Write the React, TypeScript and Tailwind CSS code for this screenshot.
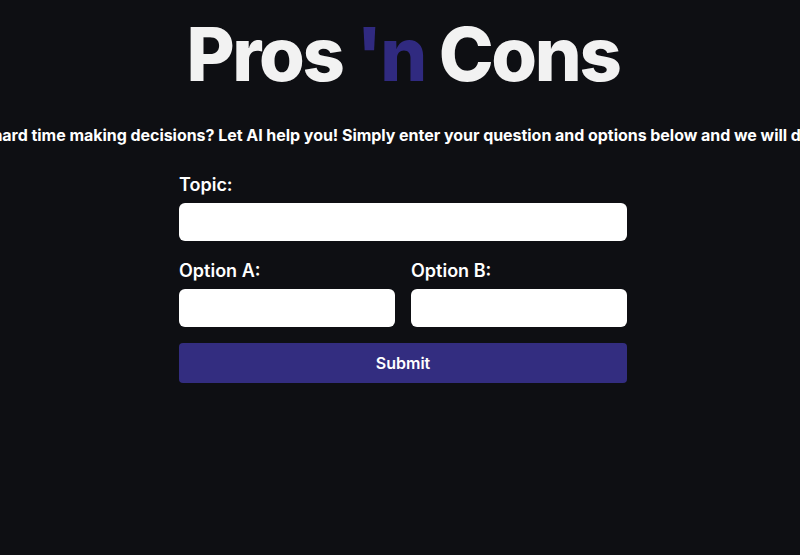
import React from 'react';

export default function App() {
  return (
    <div
      className="min-h-screen w-full overflow-hidden bg-[#0e0f13] text-white"
      style={{ fontFamily: 'Inter, "Noto Sans", sans-serif' }}
    >
      <div className="flex flex-col items-center pl-[6px] pt-[17px]">
        <h1 className="text-[74px] font-extrabold leading-none tracking-[-0.032em] text-[#f2f2f2]">
          Pros <span className="text-[#302a80]">'n</span> Cons
        </h1>
        <p className="-ml-[6px] mt-8 whitespace-nowrap text-base font-bold tracking-[-0.0025em]">
          Having a hard time making decisions? Let AI help you! Simply enter your question and options below and we will do the rest!
        </p>
        <form className="mt-6 flex w-[448px] flex-col" onSubmit={(e) => e.preventDefault()}>
          <label className="text-lg font-semibold">Topic:</label>
          <input type="text" className="mt-1 h-[38px] w-full rounded-md bg-white px-3 text-black outline-none" />
          <div className="mt-4 grid grid-cols-2 gap-4">
            <div className="flex flex-col">
              <label className="text-lg font-semibold">Option A:</label>
              <input type="text" className="mt-1 h-[38px] w-full rounded-md bg-white px-3 text-black outline-none" />
            </div>
            <div className="flex flex-col">
              <label className="text-lg font-semibold">Option B:</label>
              <input type="text" className="mt-1 h-[38px] w-full rounded-md bg-white px-3 text-black outline-none" />
            </div>
          </div>
          <button type="submit" className="mt-4 h-10 w-full rounded bg-[#332d80] text-base font-semibold text-white">
            Submit
          </button>
        </form>
      </div>
    </div>
  );
}
